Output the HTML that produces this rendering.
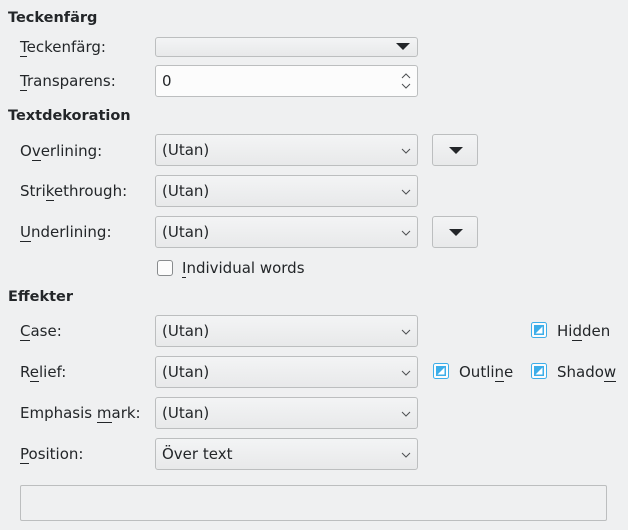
<!DOCTYPE html>
<html><head><meta charset="utf-8"><style>
body{margin:0;width:628px;height:530px;background:#eff0f1;font-family:"DejaVu Sans","Liberation Sans",sans-serif;font-size:15px;color:#232629;position:relative;overflow:hidden}
.a{position:absolute;white-space:nowrap}
.h{font-weight:bold;left:8px;font-size:14.5px}
.l{left:20px}
u{text-decoration:none;border-bottom:1px solid #232629}
.cb{position:absolute;left:155px;width:261px;height:30px;border:1px solid #bcbebf;border-radius:3px;background:linear-gradient(#f3f4f5,#e8e9ea);box-sizing:content-box}
.cb span{position:absolute;left:6px;top:6px}
.cb svg{position:absolute;right:6px;top:13px}
.bt{position:absolute;left:432px;width:44px;height:30px;border:1px solid #bcbebf;border-radius:3px;background:linear-gradient(#f3f4f5,#e8e9ea)}
.tri{position:absolute;left:16px;top:12px;width:0;height:0;border-left:7px solid transparent;border-right:7px solid transparent;border-top:7px solid #232629}
.chk{position:absolute}
</style></head><body>
<div class="a h" style="top:10px">Teckenfärg</div>
<div class="a l" style="top:38px"><u>T</u>eckenfärg:</div>
<div class="cb" style="top:37px;height:18px"><div class="tri" style="left:240px;top:5px"></div></div>
<div class="a l" style="top:72px"><u>T</u>ransparens:</div>
<div class="cb" style="top:65px;background:#fcfcfc"><span>0</span>
<svg width="12" height="22" style="top:4px;right:5px" viewBox="0 0 12 22"><path d="M2 8l4-4 4 4M2 14l4 4 4-4" fill="none" stroke="#4d5052" stroke-width="1"/></svg></div>
<div class="a h" style="top:108px">Textdekoration</div>

<div class="a l" style="top:142px">O<u>v</u>erlining:</div>
<div class="cb" style="top:134px"><span>(Utan)</span><svg width="10" height="6"><path d="M1 1l4 4 4-4" fill="none" stroke="#4d5052"/></svg></div>
<div class="bt" style="top:134px"><div class="tri"></div></div>

<div class="a l" style="top:182px">Stri<u>k</u>ethrough:</div>
<div class="cb" style="top:175px"><span>(Utan)</span><svg width="10" height="6"><path d="M1 1l4 4 4-4" fill="none" stroke="#4d5052"/></svg></div>

<div class="a l" style="top:223px"><u>U</u>nderlining:</div>
<div class="cb" style="top:216px"><span>(Utan)</span><svg width="10" height="6"><path d="M1 1l4 4 4-4" fill="none" stroke="#4d5052"/></svg></div>
<div class="bt" style="top:216px"><div class="tri"></div></div>

<div class="chk" style="left:157px;top:260px;width:14px;height:14px;border:1px solid #888b8d;border-radius:3px;background:#fcfcfc"></div>
<div class="a" style="left:182px;top:259px"><u>I</u>ndividual words</div>

<div class="a h" style="top:289px">Effekter</div>

<div class="a l" style="top:322px"><u>C</u>ase:</div>
<div class="cb" style="top:315px"><span>(Utan)</span><svg width="10" height="6"><path d="M1 1l4 4 4-4" fill="none" stroke="#4d5052"/></svg></div>

<div class="a l" style="top:363px">R<u>e</u>lief:</div>
<div class="cb" style="top:356px"><span>(Utan)</span><svg width="10" height="6"><path d="M1 1l4 4 4-4" fill="none" stroke="#4d5052"/></svg></div>

<div class="a l" style="top:404px">Emphasis <u>m</u>ark:</div>
<div class="cb" style="top:397px"><span>(Utan)</span><svg width="10" height="6"><path d="M1 1l4 4 4-4" fill="none" stroke="#4d5052"/></svg></div>

<div class="a l" style="top:445px"><u>P</u>osition:</div>
<div class="cb" style="top:438px"><span>Över text</span><svg width="10" height="6"><path d="M1 1l4 4 4-4" fill="none" stroke="#4d5052"/></svg></div>

<svg class="chk" style="left:531px;top:322px" width="16" height="16" viewBox="0 0 16 16"><rect x="0.5" y="0.5" width="15" height="15" rx="2" fill="#fcfcfc" stroke="#3daee9"/><rect x="3" y="3" width="10" height="10" fill="#3daee9"/><path d="M11.5 4.5V11.5H4.5Z" fill="#fff"/></svg>
<div class="a" style="left:557px;top:322px">Hi<u>d</u>den</div>

<svg class="chk" style="left:433px;top:363px" width="16" height="16" viewBox="0 0 16 16"><rect x="0.5" y="0.5" width="15" height="15" rx="2" fill="#fcfcfc" stroke="#3daee9"/><rect x="3" y="3" width="10" height="10" fill="#3daee9"/><path d="M11.5 4.5V11.5H4.5Z" fill="#fff"/></svg>
<div class="a" style="left:459px;top:363px">Outli<u>n</u>e</div>

<svg class="chk" style="left:531px;top:363px" width="16" height="16" viewBox="0 0 16 16"><rect x="0.5" y="0.5" width="15" height="15" rx="2" fill="#fcfcfc" stroke="#3daee9"/><rect x="3" y="3" width="10" height="10" fill="#3daee9"/><path d="M11.5 4.5V11.5H4.5Z" fill="#fff"/></svg>
<div class="a" style="left:557px;top:363px">Shado<u>w</u></div>

<div style="position:absolute;left:20px;top:485px;width:585px;height:34px;border:1px solid #bcbebf;border-radius:2px;background:#eff0f1"></div>
</body></html>
